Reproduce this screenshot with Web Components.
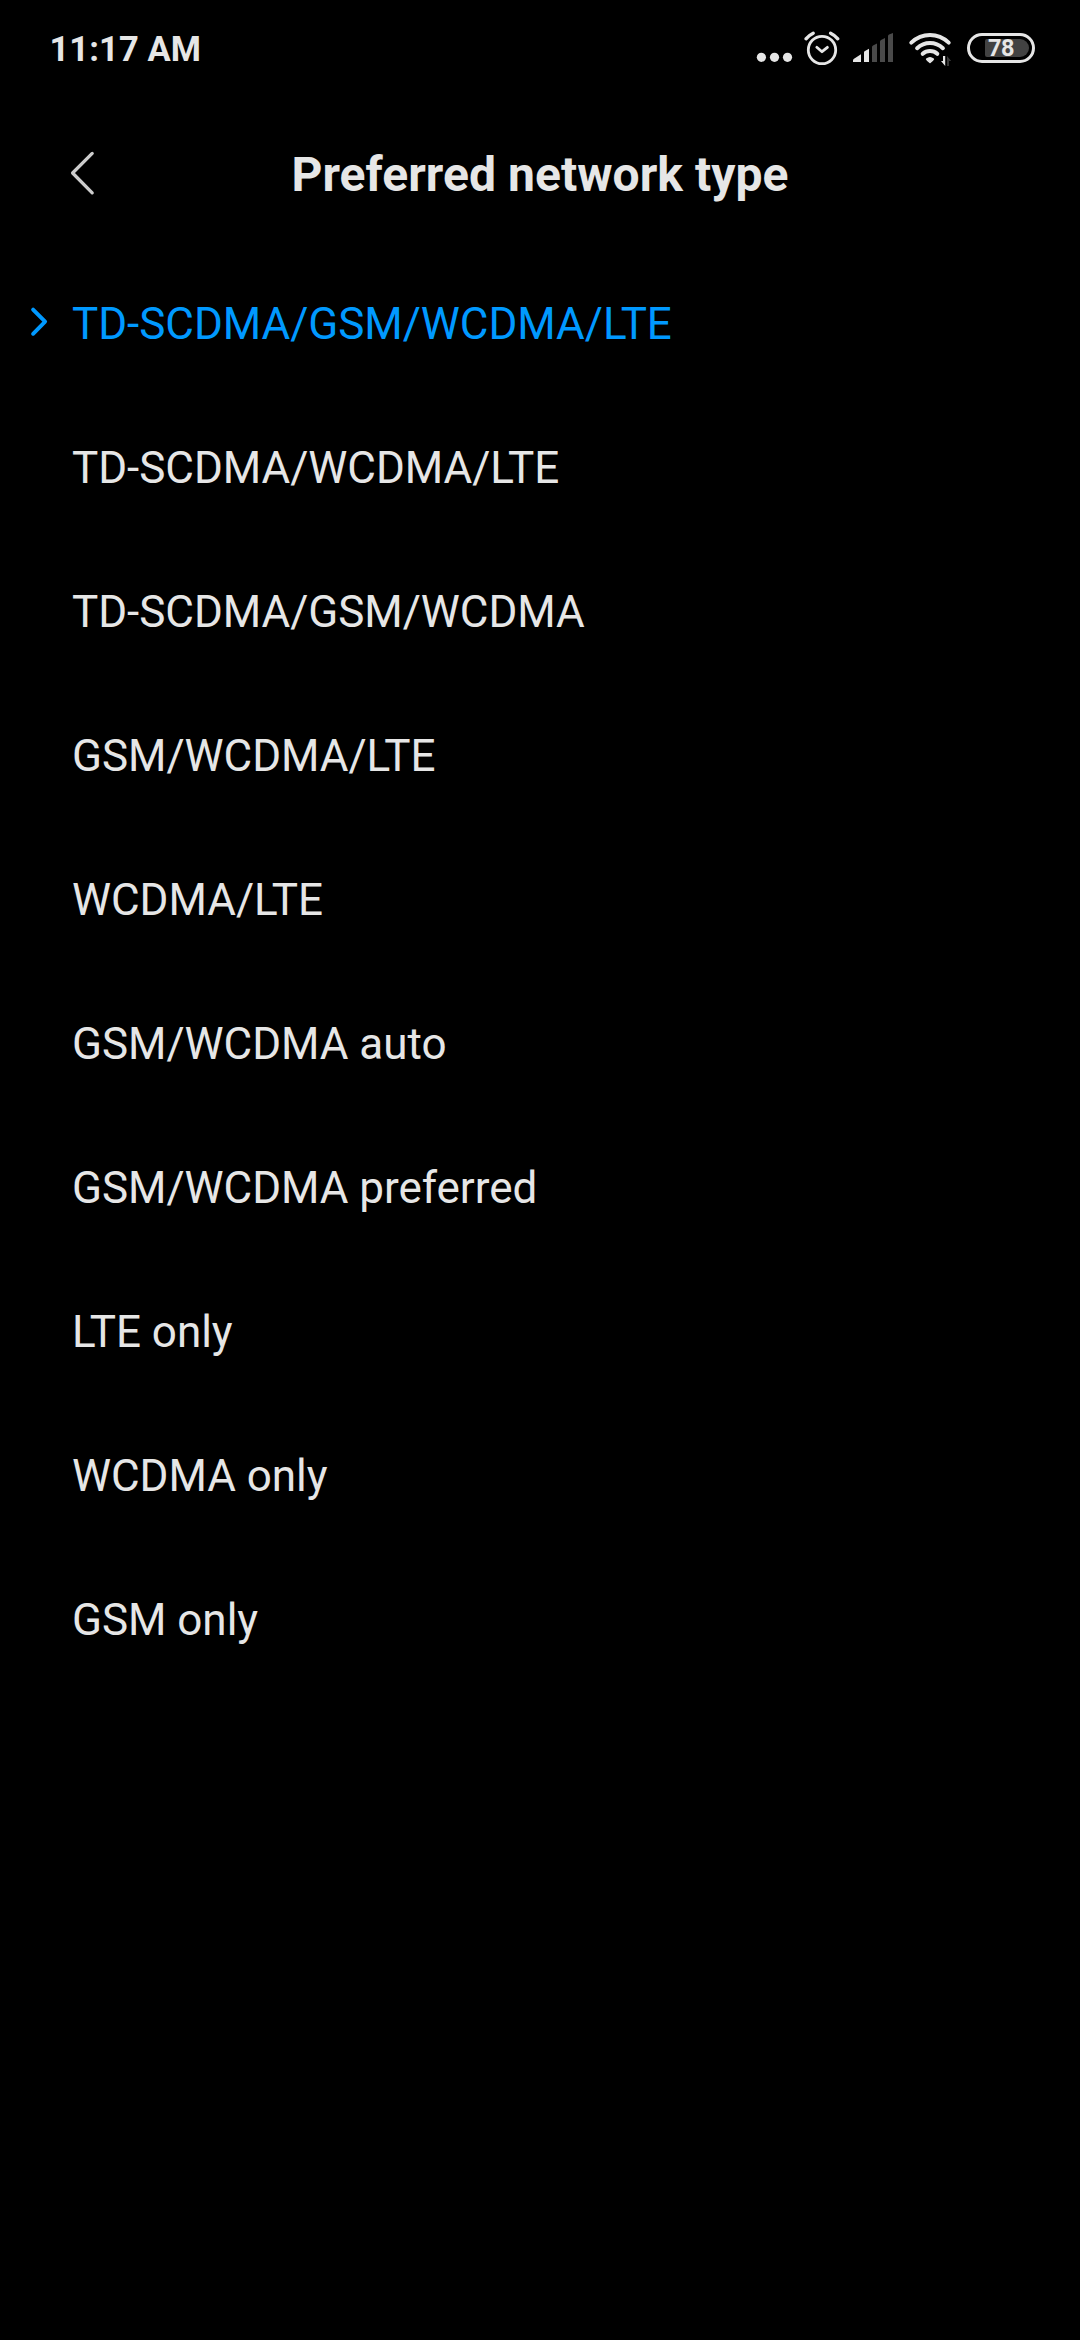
<!DOCTYPE html>
<html lang="en">
<head>
<meta charset="utf-8">
<title>Preferred network type</title>
<style>
  html, body { margin: 0; background: #000; }
  body { font-family: Roboto, sans-serif; color: #e6e6e6; }
</style>
</head>
<body>
<network-screen></network-screen>

<script>
class BaseElement extends HTMLElement {
  connectedCallback() {
    if (this.shadowRoot) return;
    this.attachShadow({ mode: 'open' }).innerHTML = this.render();
  }
}

class BatteryLevel extends BaseElement {
  render() {
    const level = this.getAttribute('level');
    return `<style>
      :host { display: flex; box-sizing: border-box; width: 68px; height: 30px; border: 3px solid #e6e6e6; border-radius: 15px; align-items: center; justify-content: flex-end; padding-right: 3px; }
      .fill { box-sizing: border-box; width: 44px; height: 18px; border-radius: 2px 9px 9px 2px; background: #424242; display: flex; align-items: center; padding-left: 3px; }
      span { font-size: 23.5px; font-weight: 700; line-height: 18px; letter-spacing: -0.6px; color: #e6e6e6; }
    </style><div class="fill"><span>${level}</span></div>`;
  }
}
customElements.define('battery-level', BatteryLevel);

class StatusBar extends BaseElement {
  render() {
    return `<style>
      :host { display: flex; box-sizing: border-box; height: 96px; padding: 0 45px 0 49.5px; align-items: center; justify-content: space-between; }
      .time { font-size: 34.5px; font-weight: 700; line-height: 40px; padding-top: 2px; letter-spacing: 0.07px; }
      .icons { display: flex; align-items: center; }
      svg { display: block; height: 40px; }
    </style>
    <span class="time"><slot></slot></span>
    <div class="icons">
      <svg width="47" viewBox="755 28 47 40"><g fill="#e6e6e6"><circle cx="761.4" cy="57.3" r="4.6"/><circle cx="774.5" cy="57.3" r="4.6"/><circle cx="787.5" cy="57.3" r="4.6"/></g></svg>
      <svg width="44" viewBox="802 28 44 40"><g fill="none" stroke="#e6e6e6" stroke-linecap="round" stroke-linejoin="round">
        <circle cx="822" cy="50" r="13.7" stroke-width="2.8"/>
        <path stroke-width="2.8" d="M816.8 47.3 822 51.7 827.4 47.3"/>
        <path stroke-width="3.4" d="M806 38.8Q809 35.2 813.2 33.2M837.8 38.8Q834.8 35.2 830.6 33.2"/></g></svg>
      <svg width="56" viewBox="846 28 56 40">
        <path fill="#e6e6e6" d="M853 62V60.4Q853 59.4 854 58.8L861 54.3V62ZM864 62V52.4Q864 51.5 865 51L869 48.7V62Z"/>
        <path fill="#4a4a4a" d="M872 62V47Q872 46 873 45.4L877 43.5V62ZM880 62V41.6Q880 40.7 881 40L885 38V62ZM888 62V36Q888 35 889 34.4L893 33V62Z"/></svg>
      <svg width="65" viewBox="902 28 65 40">
        <g fill="none" stroke="#e6e6e6" stroke-width="4" stroke-linecap="round">
          <path d="M911.3 42.6Q919.5 35 930 35Q940.5 35 948.7 42.6"/>
          <path d="M917.1 48.2Q922.7 43 930 43Q937.3 43 942.9 48.2"/>
          <path d="M922.7 53.8Q925.8 51 930 51Q934.2 51 937.3 53.8"/></g>
        <path fill="#e6e6e6" stroke="#e6e6e6" stroke-width="1.4" stroke-linejoin="round" d="M926.6 59.1Q930 56.4 933.4 59.1Q933 60 930 62.5Q927 60 926.6 59.1Z"/>
        <path fill="#e6e6e6" d="M943 56H945.2V66L941 61H943Z"/>
        <path fill="#383838" d="M947 56 951.2 61H949V66H947Z"/></svg>
      <battery-level level="78"></battery-level>
    </div>`;
  }
}
customElements.define('status-bar', StatusBar);

class TitleBar extends BaseElement {
  render() {
    return `<style>
      :host { display: grid; grid-template-columns: 150px 1fr 150px; height: 156px; align-items: center; }
      svg { display: block; margin: -1px 0 0 66px; }
      h1 { margin: 0; padding-top: 1px; font-size: 48px; font-weight: 700; line-height: 56px; text-align: center; white-space: nowrap; letter-spacing: 0.05px; }
    </style>
    <svg width="32" height="48" viewBox="66 150.3 32 48"><path d="M92.2 153.7 72.6 173.3 92.2 193.1" fill="none" stroke="#ccc" stroke-width="3.3" stroke-linecap="round" stroke-linejoin="round"/></svg>
    <h1><slot></slot></h1>`;
  }
}
customElements.define('title-bar', TitleBar);

class NetworkOption extends BaseElement {
  render() {
    const mark = this.hasAttribute('selected')
      ? '<svg width="24" height="36" viewBox="28 304.3 24 36"><path d="M33.1 309.9 45.1 322 33.1 334.1" fill="none" stroke="currentColor" stroke-width="3.9" stroke-linecap="round" stroke-linejoin="round"/></svg>'
      : '';
    return `<style>
      :host { display: flex; height: 144px; align-items: center; font-size: 44px; line-height: 52px; letter-spacing: -0.03px; white-space: nowrap; }
      :host([selected]) { color: #0099ff; }
      .mark { width: 72px; box-sizing: border-box; padding: 0 0 4px 28px; }
      svg { display: block; }
    </style><div class="mark">${mark}</div><span><slot></slot></span>`;
  }
}
customElements.define('network-option', NetworkOption);

class NetworkScreen extends BaseElement {
  render() {
    return `<style>
      :host { display: flex; flex-direction: column; width: 1080px; height: 2340px; background: #000; overflow: hidden; }
      main { display: flex; flex-direction: column; }
    </style>
    <status-bar>11:17 AM</status-bar>
    <title-bar>Preferred network type</title-bar>
    <main>
      <network-option selected>TD-SCDMA/GSM/WCDMA/LTE</network-option>
      <network-option>TD-SCDMA/WCDMA/LTE</network-option>
      <network-option>TD-SCDMA/GSM/WCDMA</network-option>
      <network-option>GSM/WCDMA/LTE</network-option>
      <network-option>WCDMA/LTE</network-option>
      <network-option>GSM/WCDMA auto</network-option>
      <network-option>GSM/WCDMA preferred</network-option>
      <network-option>LTE only</network-option>
      <network-option>WCDMA only</network-option>
      <network-option>GSM only</network-option>
    </main>`;
  }
}
customElements.define('network-screen', NetworkScreen);
</script>
</body>
</html>
